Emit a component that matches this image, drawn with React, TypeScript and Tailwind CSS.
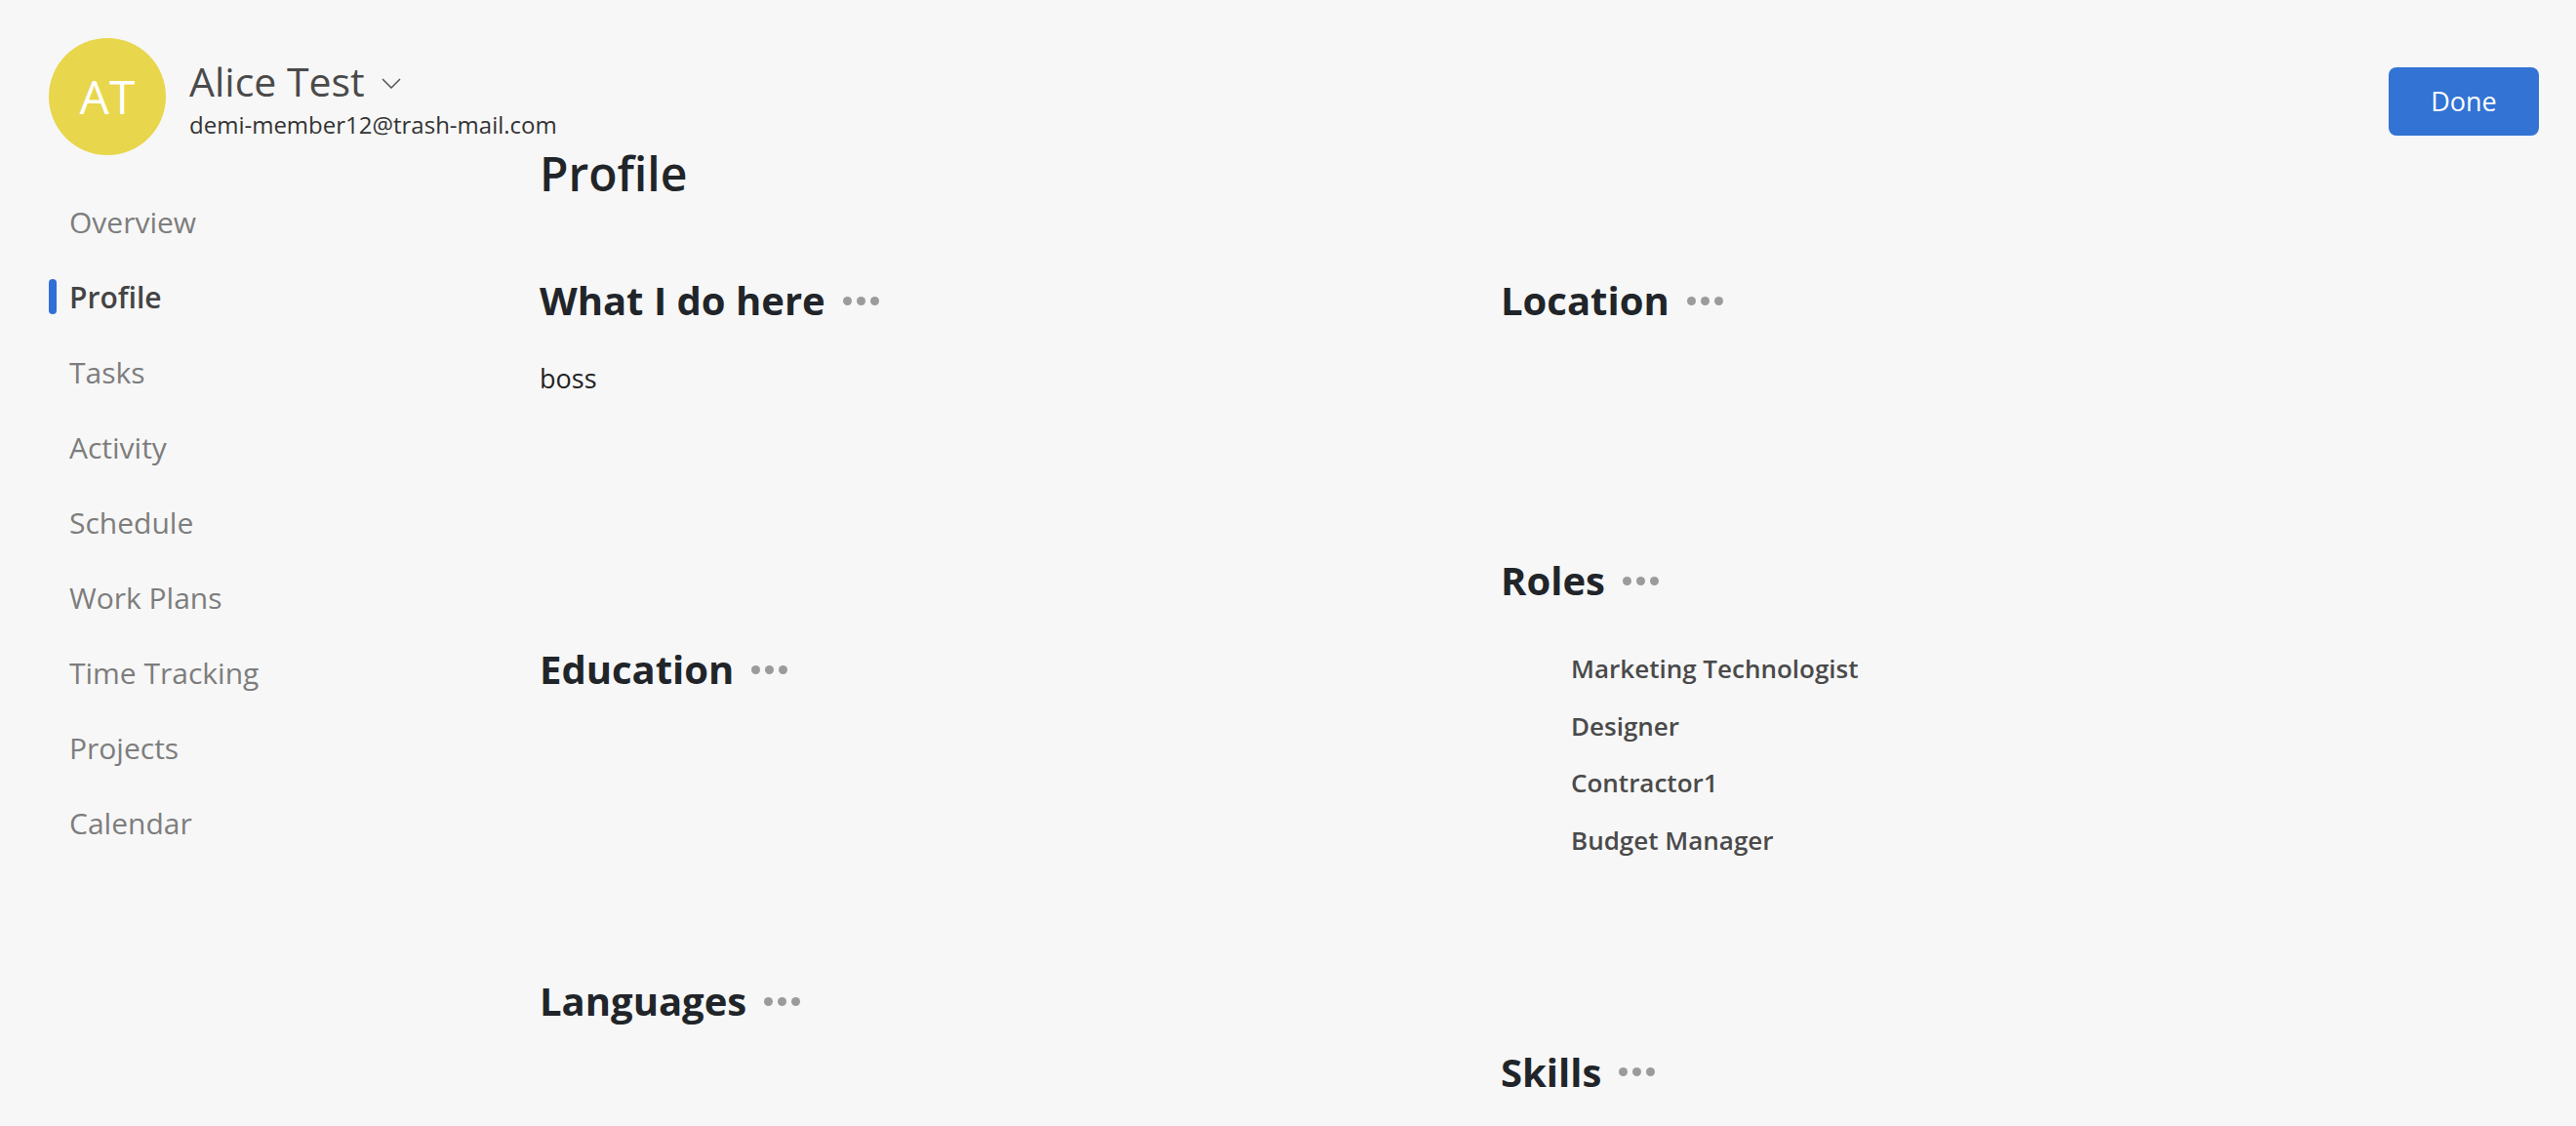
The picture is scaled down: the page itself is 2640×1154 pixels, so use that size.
const nav = [
  'Overview',
  'Profile',
  'Tasks',
  'Activity',
  'Schedule',
  'Work Plans',
  'Time Tracking',
  'Projects',
  'Calendar',
];

const roles = ['Marketing Technologist', 'Designer', 'Contractor1', 'Budget Manager'];

function Dots() {
  return (
    <span className="ml-[18px] flex items-center gap-[5px]">
      <span className="h-[9px] w-[9px] rounded-full bg-[#9b9b9b]" />
      <span className="h-[9px] w-[9px] rounded-full bg-[#9b9b9b]" />
      <span className="h-[9px] w-[9px] rounded-full bg-[#9b9b9b]" />
    </span>
  );
}

function SectionTitle({ title }: { title: string }) {
  return (
    <div className="flex h-[56px] items-center">
      <h2 className="text-[40px] font-bold leading-[56px] text-[#212529]">{title}</h2>
      <Dots />
    </div>
  );
}

export default function App() {
  return (
    <div
      className="flex min-h-screen bg-[#f7f7f7]"
      style={{ fontFamily: '"Open Sans", "Noto Sans", sans-serif' }}
    >
      <aside className="w-[505px] shrink-0 pl-[50px] pt-[39px]">
        <div className="flex items-start gap-[24px]">
          <div className="flex h-[120px] w-[120px] shrink-0 items-center justify-center rounded-full bg-[#e8d64c] text-[48px] leading-none text-white">
            AT
          </div>
          <div className="pt-[16px] whitespace-nowrap">
            <div className="flex items-center">
              <span className="text-[41px] font-medium leading-[56px] text-[#4a4a4a]">
                Alice Test
              </span>
              <svg
                className="ml-[17px] mt-[4px]"
                width="20"
                height="11"
                viewBox="0 0 20 11"
                fill="none"
              >
                <polyline points="1,1 10,10 19,1" stroke="#555" strokeWidth="1.5" />
              </svg>
            </div>
            <div className="text-[24px] leading-[33px] text-[#333]">
              demi-member12@trash-mail.com
            </div>
          </div>
        </div>

        <nav className="mt-[30px]">
          {nav.map((item) => {
            const active = item === 'Profile';
            return (
              <div key={item} className="relative h-[77px] pl-[21px]">
                {active && (
                  <span className="absolute left-0 top-[20px] h-[36px] w-[8px] rounded-full bg-[#2f6fd6]" />
                )}
                <span
                  className={
                    active
                      ? 'text-[30px] font-semibold leading-[77px] text-[#444]'
                      : 'text-[30px] leading-[77px] text-[#7d7d7d]'
                  }
                >
                  {item}
                </span>
              </div>
            );
          })}
        </nav>
      </aside>

      <main className="flex-1 pl-[48px] pr-[38px] pt-[69px]">
        <div className="flex justify-end">
          <button className="h-[70px] w-[154px] rounded-[8px] bg-[#3273d4] text-[27px] text-white">
            Done
          </button>
        </div>

        <h1 className="mt-[7px] text-[48px] font-semibold leading-[64px] text-[#212529]">
          Profile
        </h1>

        <div className="mt-[70px] grid grid-cols-[985px_1fr]">
          <div>
            <section className="pb-[250px]">
              <SectionTitle title="What I do here" />
              <p className="mt-[32px] text-[27px] leading-[40px] text-[#222]">boss</p>
            </section>
            <section className="pb-[284px]">
              <SectionTitle title="Education" />
            </section>
            <section>
              <SectionTitle title="Languages" />
            </section>
          </div>

          <div>
            <section className="pb-[231px]">
              <SectionTitle title="Location" />
            </section>
            <section className="pb-[180px]">
              <SectionTitle title="Roles" />
              <ul className="mt-[33px] pl-[72px]">
                {roles.map((r) => (
                  <li
                    key={r}
                    className="text-[26px] font-semibold leading-[58.7px] text-[#4a4a4a]"
                  >
                    {r}
                  </li>
                ))}
              </ul>
            </section>
            <section>
              <SectionTitle title="Skills" />
            </section>
          </div>
        </div>
      </main>
    </div>
  );
}
